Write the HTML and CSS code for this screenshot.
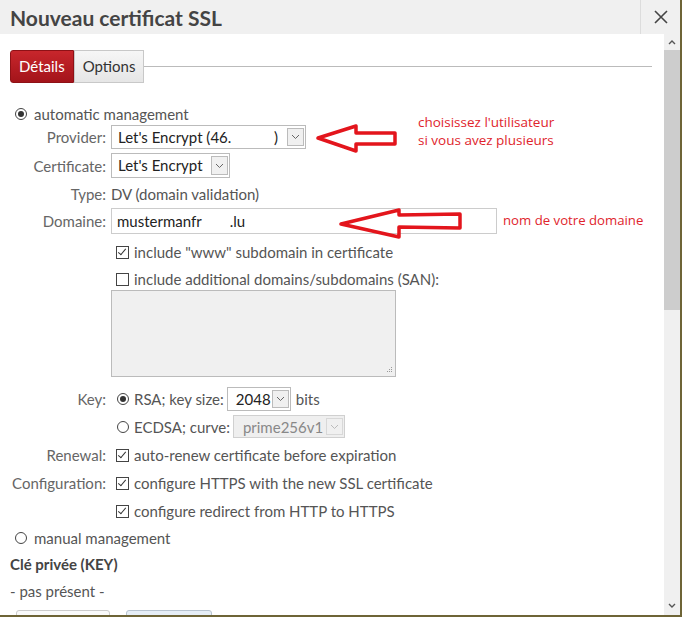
FILE: index.html
```html
<!DOCTYPE html>
<html lang="fr">
<head>
  <meta charset="UTF-8">
  <title>Nouveau certificat SSL</title>
  <link rel="stylesheet" href="styles.css">
</head>
<body>
  <div class="dialog">
    <div class="titlebar">
      <h1>Nouveau certificat SSL</h1>
      <div class="close">
        <svg width="14" height="14" viewBox="0 0 14 14"><path d="M1 1L13 13M13 1L1 13" stroke="#444" stroke-width="1.6" fill="none"/></svg>
      </div>
    </div>
    <div class="content">
      <div class="pane">
        <div class="tabs">
          <span class="tab active">Détails</span><span class="tab">Options</span>
          <span class="tabline"></span>
        </div>

        <div class="row r-auto">
          <span class="radio on"></span><span>automatic management</span>
        </div>

        <div class="form">
          <div class="frow r-provider">
            <label>Provider:</label>
            <div class="select w-provider"><span class="val"><span>Let's Encrypt (46.</span><span class="end">)</span></span><span class="arr"><svg width="9" height="6" viewBox="0 0 9 6"><path d="M1 1L4.5 4.5L8 1" stroke="#666" fill="none"/></svg></span></div>
          </div>
          <div class="frow r-cert">
            <label>Certificate:</label>
            <div class="select w-cert"><span class="val">Let's Encrypt</span><span class="arr"><svg width="9" height="6" viewBox="0 0 9 6"><path d="M1 1L4.5 4.5L8 1" stroke="#666" fill="none"/></svg></span></div>
          </div>
          <div class="frow r-type">
            <label>Type:</label>
            <span>DV (domain validation)</span>
          </div>
          <div class="frow r-domain">
            <label>Domaine:</label>
            <div class="input">mustermanfr<span class="gap2"></span>.lu</div>
          </div>
          <div class="frow r-www">
            <label></label>
            <span class="check on"></span><span>include "www" subdomain in certificate</span>
          </div>
          <div class="frow r-san">
            <label></label>
            <span class="check"></span><span>include additional domains/subdomains (SAN):</span>
          </div>
          <div class="frow r-area">
            <label></label>
            <div class="textarea">
              <svg class="grip" width="8" height="8" viewBox="0 0 8 8"><g fill="#999"><rect x="6" y="1" width="1" height="1"/><rect x="4" y="3" width="1" height="1"/><rect x="6" y="3" width="1" height="1"/><rect x="2" y="5" width="1" height="1"/><rect x="4" y="5" width="1" height="1"/><rect x="6" y="5" width="1" height="1"/></g></svg>
            </div>
          </div>
          <div class="frow r-key">
            <label>Key:</label>
            <span class="radio on ml"></span><span>RSA; key size:</span>
            <div class="select w-key"><span class="val">2048</span><span class="arr"><svg width="9" height="6" viewBox="0 0 9 6"><path d="M1 1L4.5 4.5L8 1" stroke="#666" fill="none"/></svg></span></div>
            <span>bits</span>
          </div>
          <div class="frow r-ecdsa">
            <label></label>
            <span class="radio ml"></span><span>ECDSA; curve:</span>
            <div class="select w-curve disabled"><span class="val">prime256v1</span><span class="arr"><svg width="9" height="6" viewBox="0 0 9 6"><path d="M1 1L4.5 4.5L8 1" stroke="#bbb" fill="none"/></svg></span></div>
          </div>
          <div class="frow r-renew">
            <label>Renewal:</label>
            <span class="check on"></span><span>auto-renew certificate before expiration</span>
          </div>
          <div class="frow r-conf">
            <label>Configuration:</label>
            <span class="check on"></span><span>configure HTTPS with the new SSL certificate</span>
          </div>
          <div class="frow r-redir">
            <label></label>
            <span class="check on"></span><span>configure redirect from HTTP to HTTPS</span>
          </div>
        </div>

        <div class="row r-manual">
          <span class="radio"></span><span>manual management</span>
        </div>
        <h2 class="section">Clé privée (KEY)</h2>
        <div class="row r-pas">- pas présent -</div>
        <div class="buttons">
          <span class="btn"></span><span class="btn blue"></span>
        </div>

        <div class="note note-user">choisissez l'utilisateur<br>si vous avez plusieurs</div>
        <div class="note note-domain">nom de votre domaine</div>
        <svg class="arrow arrow-1" width="84" height="30" viewBox="0 0 84 30">
          <path d="M2 14 L40 2 L40 9 L79 9 L79 20 L40 20 L40 27 Z" fill="none" stroke="#e3151c" stroke-width="3.5" stroke-linejoin="round"/>
        </svg>
        <svg class="arrow arrow-2" width="126" height="34" viewBox="0 0 126 34">
          <path d="M2 17 L60 3 L60 8 L121 7 L121 21 L60 20 L60 30 Z" fill="none" stroke="#e3151c" stroke-width="3.5" stroke-linejoin="round"/>
        </svg>
      </div>
      <div class="scrollbar">
        <span class="sb-up"><svg width="8" height="5" viewBox="0 0 8 5"><path d="M1 4L4 1L7 4" stroke="#555" stroke-width="1.4" fill="none"/></svg></span>
        <span class="sb-thumb"></span>
        <span class="sb-down"><svg width="8" height="5" viewBox="0 0 8 5"><path d="M1 1L4 4L7 1" stroke="#555" stroke-width="1.4" fill="none"/></svg></span>
      </div>
    </div>
  </div>
</body>
</html>
```

FILE: styles.css
```css
html {
  background: #6e6436;
}
body {
  margin: 0;
  font-family: Lato, 'Open Sans', sans-serif;
  font-size: 15px;
  color: #555;
}
.dialog {
  width: 680px;
  height: 615px;
  background: #f0f0f0;
  overflow: hidden;
}
.titlebar {
  display: flex;
  height: 34px;
}
.titlebar h1 {
  flex: 1;
  margin: 0;
  padding: 5px 0 0 10px;
  font-size: 21px;
  font-weight: bold;
  color: #444;
}
.close {
  width: 39px;
  border-left: 1px solid #dcdcdc;
  display: flex;
  align-items: center;
  justify-content: center;
}
.content {
  display: flex;
  height: 581px;
}
.pane {
  position: relative;
  flex: 1;
  background: #fff;
  padding-left: 10px;
}
.scrollbar {
  width: 16px;
  display: flex;
  flex-direction: column;
  background: #f0f0f0;
}
.sb-up, .sb-down {
  height: 16px;
  display: flex;
  align-items: center;
  justify-content: center;
}
.sb-thumb {
  height: 260px;
  background: #cdcdcd;
}
.sb-down {
  margin-top: auto;
  margin-bottom: 2px;
}

/* tabs */
.tabs {
  display: flex;
  align-items: center;
  margin-top: 16px;
  height: 33px;
}
.tab {
  height: 31px;
  line-height: 31px;
  padding: 0 8px;
  border: 1px solid #c8c8c8;
  background: linear-gradient(#f6f6f6, #e6e6e6);
  color: #333;
}
.tab.active {
  background: linear-gradient(#c8262c, #a3141a);
  border-color: #8e1116;
  color: #fff;
  border-radius: 3px 0 0 3px;
}
.tab:last-of-type {
  border-left: none;
  border-radius: 0 3px 3px 0;
}
.tabline {
  flex: 1;
  height: 1px;
  background: #bbb;
  margin-right: 12px;
}

/* rows */
.row, .frow {
  display: flex;
  align-items: center;
  height: 20px;
}
.form label {
  width: 96px;
  margin-right: 5px;
  text-align: right;
  color: #666;
}
.r-auto { margin-top: 21px; }
.r-provider { margin-top: 1px; height: 24px; }
.r-cert { margin-top: 4px; height: 25px; }
.r-type { margin-top: 6px; }
.r-domain { margin-top: 4px; height: 26px; }
.r-www { margin-top: 8px; }
.r-san { margin-top: 7px; }
.r-area { margin-top: 1px; height: 87px; }
.r-key { margin-top: 10px; height: 24px; }
.r-ecdsa { margin-top: 4px; height: 23px; }
.r-renew { margin-top: 7px; }
.r-conf { margin-top: 8px; }
.r-redir { margin-top: 8px; }
.r-manual { margin-top: 7px; }
.r-pas { margin-top: 7px; }

.radio {
  width: 10px;
  height: 10px;
  border: 1px solid #444;
  border-radius: 50%;
  margin: 0 7px 0 5px;
  position: relative;
  flex: none;
}
.radio.on::after {
  content: "";
  position: absolute;
  left: 2px;
  top: 2px;
  width: 6px;
  height: 6px;
  border-radius: 50%;
  background: #333;
}
.radio.ml { margin: 0 5px 0 6px; }
.check {
  width: 11px;
  height: 11px;
  border: 1px solid #444;
  margin: 0 5px 0 5px;
  position: relative;
  flex: none;
}
.check.on::after {
  content: "";
  position: absolute;
  left: 3px;
  top: 0;
  width: 3px;
  height: 7px;
  border: solid #333;
  border-width: 0 1.5px 1.5px 0;
  transform: rotate(40deg);
}

.select {
  display: flex;
  height: 100%;
  box-sizing: border-box;
  border: 1px solid #bbb;
  background: #fff;
  color: #222;
  flex: none;
}
.select .val {
  flex: 1;
  display: flex;
  padding-left: 6px;
  line-height: 22px;
  white-space: nowrap;
  overflow: hidden;
}
.select .val .end {
  margin-left: auto;
  margin-right: 9px;
}
.select .arr {
  flex: none;
  width: 15px;
  background: #f0f0f0;
  display: flex;
  align-items: center;
  justify-content: center;
  margin: 2px 1px 2px 0;
  border: 1px solid #bbb;
}
.gap2 { display: inline-block; width: 28px; }
.w-provider { width: 195px; }
.w-cert { width: 119px; }
.w-key { width: 64px; margin: 0 5px 0 3px; }
.w-key .val { padding-left: 8px; }
.w-curve { width: 112px; margin-left: 3px; }
.select.disabled { background: #efefef; color: #888; border-color: #d0d0d0; }
.select.disabled .val { padding-left: 9px; }
.select.disabled .arr { border-color: #d8d8d8; }

.input {
  width: 386px;
  height: 100%;
  box-sizing: border-box;
  border: 1px solid #ccc;
  padding-left: 5px;
  line-height: 24px;
  color: #222;
}
.textarea {
  position: relative;
  width: 285px;
  height: 87px;
  box-sizing: border-box;
  border: 1px solid #bbb;
  background: #f0f0f0;
}
.grip {
  position: absolute;
  right: 2px;
  bottom: 2px;
}

.section {
  margin: 6px 0 0;
  height: 20px;
  line-height: 20px;
  font-size: 15px;
  font-weight: bold;
  color: #444;
}
.buttons {
  display: flex;
  margin-top: 9px;
  margin-left: 6px;
}
.btn {
  width: 92px;
  height: 24px;
  border: 1px solid #ccc;
  border-radius: 3px;
  background: #fafafa;
  margin-right: 16px;
}
.btn.blue {
  width: 84px;
  background: #e6eef6;
  border-color: #b8c4d0;
}

/* annotations */
.note {
  position: absolute;
  font-family: 'Open Sans', sans-serif;
  font-size: 13.5px;
  line-height: 18px;
  color: #e0242c;
}
.note-user { left: 418px; top: 79px; }
.note-domain { left: 503px; top: 177px; font-size: 13.2px; }
.arrow { position: absolute; }
.arrow-1 { left: 316px; top: 90px; }
.arrow-2 { left: 339px; top: 173px; }
```
